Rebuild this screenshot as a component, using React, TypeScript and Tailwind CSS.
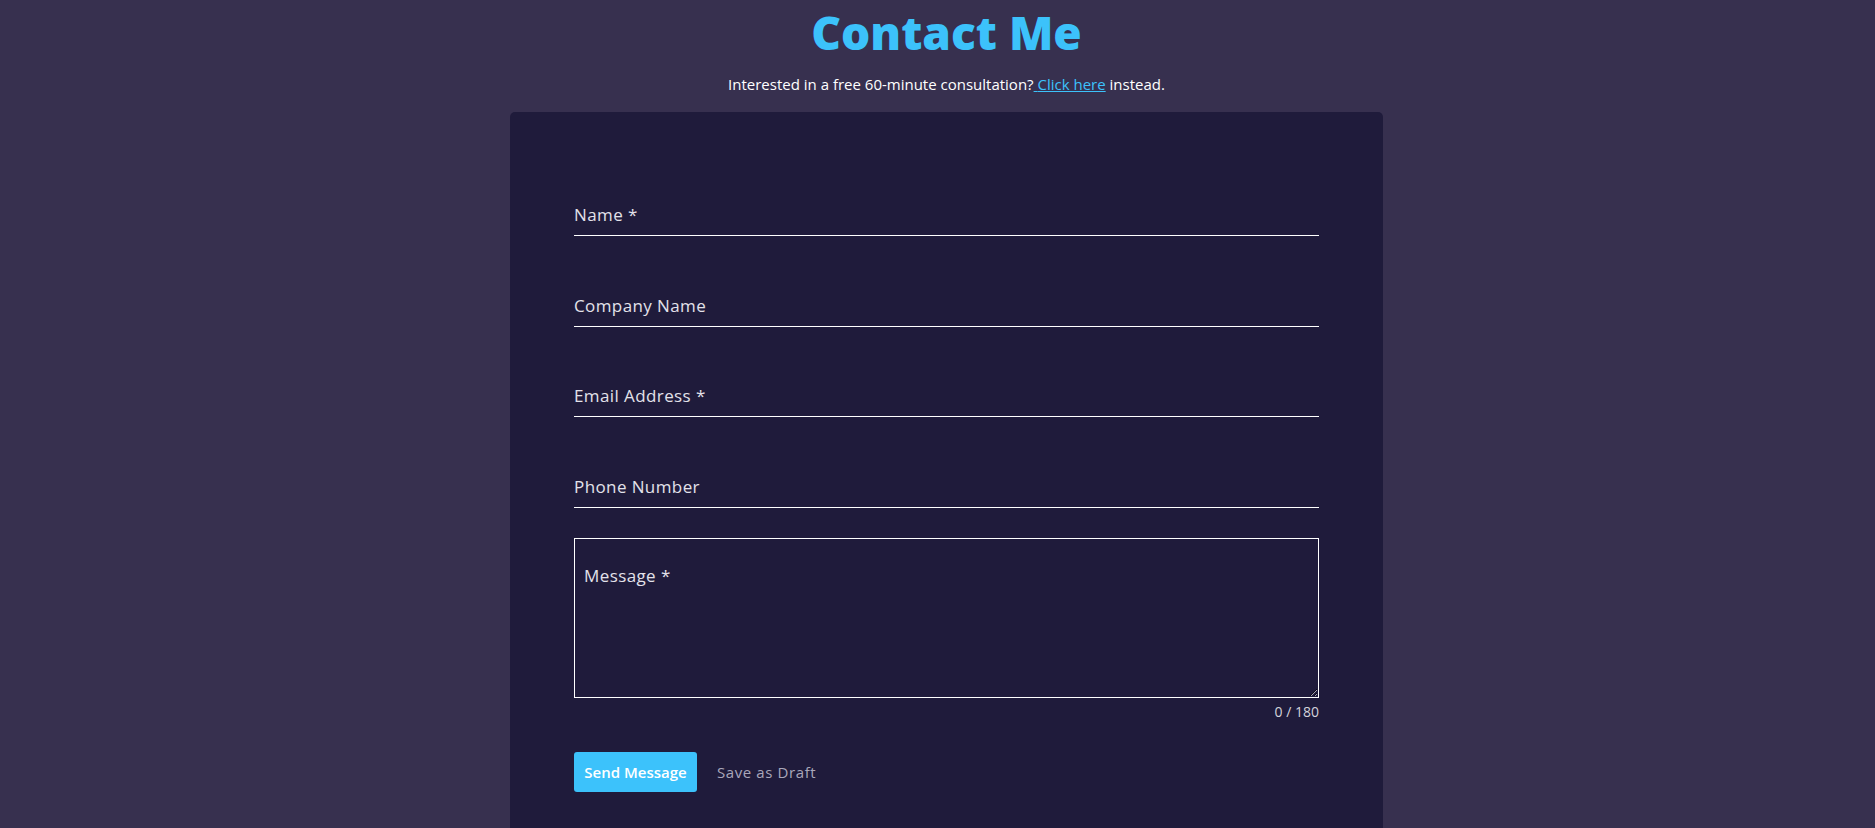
import React from "react";

const font = { fontFamily: '"Open Sans", "Liberation Sans", sans-serif' };

export default function App() {
  const fields = [
    { ph: "Name *", mt: "" },
    { ph: "Company Name", mt: "mt-[49px]" },
    { ph: "Email Address *", mt: "mt-[48px]" },
    { ph: "Phone Number", mt: "mt-[49px]" },
  ];
  return (
    <div
      className="h-[828px] w-full bg-[#37304f] flex flex-col items-center pl-[18px] overflow-hidden"
      style={font}
    >
      <h1 className="text-[46px] leading-[64px] font-extrabold text-[#3cc2fb]">
        Contact Me
      </h1>
      <p className="mt-[10px] text-[15px] leading-[20px] text-white">
        Interested in a free 60-minute consultation?
        <a href="#" className="text-[#3cc2fb] underline">
          {" "}Click here
        </a>{" "}
        instead.
      </p>
      <div className="mt-[18px] w-[873px] h-[760px] shrink-0 rounded-[5px] bg-[#1f1b3b] px-[64px] pt-[82px]">
        {fields.map((f) => (
          <div key={f.ph} className={f.mt}>
            <input
              placeholder={f.ph}
              className="block w-full h-[42px] bg-transparent border-0 border-b border-white outline-none text-[17px] text-[#e6e6ec] placeholder:text-[#e3e2ea] tracking-[0.4px] px-0"
            />
          </div>
        ))}
        <textarea
          placeholder="Message *"
          className="mt-[30px] block w-full h-[160px] bg-transparent border border-white outline-none text-[17px] leading-[24px] text-[#e6e6ec] placeholder:text-[#e3e2ea] tracking-[0.4px] pt-[25px] px-[9px]"
        />
        <div className="mt-[4px] text-right text-[14px] leading-[20px] text-[#d4d3dc]">
          0 / 180
        </div>
        <div className="mt-[30px] flex items-center gap-[20px]">
          <button className="h-[40px] w-[123px] rounded-[3px] bg-[#3cc2fb] text-white text-[15px] font-semibold">
            Send Message
          </button>
          <button className="text-[15px] text-[#a9a7ba] tracking-[0.6px]">Save as Draft</button>
        </div>
      </div>
    </div>
  );
}
